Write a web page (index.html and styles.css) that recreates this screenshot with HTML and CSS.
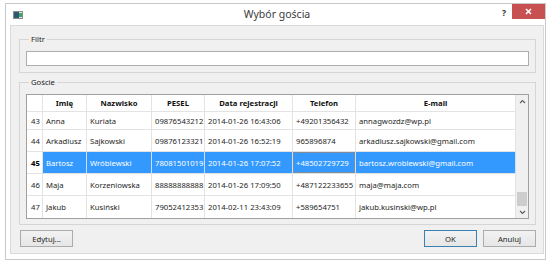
FILE: index.html
```html
<!DOCTYPE html>
<html lang="pl">

<head>
    <meta charset="UTF-8">
    <title>Wybór gościa</title>
    <link rel="stylesheet" href="styles.css">
</head>

<body>
    <div class="window">
        <div class="titlebar">
            <div class="tb-left">
                <svg class="app-icon" width="10" height="8" viewBox="0 0 10 8">
                    <rect x="0.5" y="0.5" width="9" height="7" fill="#e4e4e4" stroke="#8d8d8d"/>
                    <rect x="1" y="1" width="5" height="6" fill="#2c5878"/>
                    <rect x="6" y="2" width="3" height="4" fill="#3fa45f"/>
                </svg>
            </div>
            <div class="title">Wybór gościa</div>
            <div class="tb-right">
                <span class="help">?</span>
                <span class="close">
                    <svg width="7" height="7" viewBox="0 0 7 7">
                        <path d="M1 1 L6 6 M6 1 L1 6" stroke="#fff" stroke-width="1.6"/>
                    </svg>
                </span>
            </div>
        </div>

        <div class="client">
            <fieldset class="group group-filter">
                <legend>Filtr</legend>
                <input class="filter-input" type="text">
            </fieldset>

            <fieldset class="group group-guests">
                <legend>Goście</legend>
                <div class="grid">
                    <table class="guests">
                        <thead>
                            <tr>
                                <th class="c-num"></th>
                                <th class="c-name">Imię</th>
                                <th class="c-surname">Nazwisko</th>
                                <th class="c-pesel">PESEL</th>
                                <th class="c-date">Data rejestracji</th>
                                <th class="c-phone">Telefon</th>
                                <th class="c-mail">E-mail</th>
                            </tr>
                        </thead>
                        <tbody>
                            <tr class="first">
                                <td class="num">43</td>
                                <td>Anna</td>
                                <td>Kuriata</td>
                                <td>09876543212</td>
                                <td>2014-01-26 16:43:06</td>
                                <td>+49201356432</td>
                                <td>annagwozdz@wp.pl</td>
                            </tr>
                            <tr>
                                <td class="num">44</td>
                                <td>Arkadiusz</td>
                                <td>Sajkowski</td>
                                <td>09876123321</td>
                                <td>2014-01-26 16:52:19</td>
                                <td>965896874</td>
                                <td>arkadiusz.sajkowski@gmail.com</td>
                            </tr>
                            <tr class="selected">
                                <td class="num">45</td>
                                <td>Bartosz</td>
                                <td>Wróblewski</td>
                                <td>78081501019</td>
                                <td>2014-01-26 17:07:52</td>
                                <td class="focused">+48502729729</td>
                                <td>bartosz.wroblewski@gmail.com</td>
                            </tr>
                            <tr>
                                <td class="num">46</td>
                                <td>Maja</td>
                                <td>Korzeniowska</td>
                                <td>88888888888</td>
                                <td>2014-01-26 17:09:50</td>
                                <td>+487122233655</td>
                                <td>maja@maja.com</td>
                            </tr>
                            <tr class="last">
                                <td class="num">47</td>
                                <td>Jakub</td>
                                <td>Kusiński</td>
                                <td>79052412353</td>
                                <td>2014-02-11 23:43:09</td>
                                <td>+589654751</td>
                                <td>jakub.kusinski@wp.pl</td>
                            </tr>
                        </tbody>
                    </table>

                    <div class="scrollbar">
                        <div class="sb-arrow">
                            <svg width="7" height="5" viewBox="0 0 7 5">
                                <path d="M1 4 L3.5 1.5 L6 4" fill="none" stroke="#606060" stroke-width="1.2"/>
                            </svg>
                        </div>
                        <div class="sb-track">
                            <div class="sb-thumb"></div>
                        </div>
                        <div class="sb-arrow">
                            <svg width="7" height="5" viewBox="0 0 7 5">
                                <path d="M1 1 L3.5 3.5 L6 1" fill="none" stroke="#606060" stroke-width="1.2"/>
                            </svg>
                        </div>
                    </div>
                </div>
            </fieldset>

            <div class="buttons">
                <button class="btn btn-edit">Edytuj...</button>
                <span class="spacer"></span>
                <button class="btn btn-default">OK</button>
                <button class="btn">Anuluj</button>
            </div>
        </div>
    </div>
</body>

</html>
```

FILE: styles.css
```css
* {
    margin: 0;
    padding: 0;
    box-sizing: border-box;
}

body {
    font-family: 'Noto Sans', sans-serif;
    font-size: 7.7px;
    color: #1e1e1e;
    background: #fff;
}

/* Okno dialogowe */
.window {
    margin: 3px 0 0 5px;
    width: 541px;
    height: 257px;
    border: 1px solid #c9c9c9;
    background: #fff;
    display: flex;
    flex-direction: column;
}

.titlebar {
    height: 21px;
    display: grid;
    grid-template-columns: 1fr auto 1fr;
    align-items: start;
}

.tb-left {
    padding: 7px 0 0 7px;
}

.app-icon {
    display: block;
}

.title {
    font-size: 10.5px;
    color: #3a3a3a;
    line-height: 21px;
    padding-left: 3px;
}

.tb-right {
    display: flex;
    justify-content: flex-end;
    align-items: flex-start;
}

.help {
    font-weight: bold;
    font-size: 8.5px;
    color: #333;
    margin: 4px 6px 0 0;
    line-height: 10px;
}

.close {
    width: 33px;
    height: 15px;
    background: #c75050;
    display: flex;
    align-items: center;
    justify-content: center;
}

.client {
    flex: 1;
    margin: 0 1px 5px 4px;
    background: #f0f0f0;
    border: 1px solid #dadada;
    padding: 8px 7px 0 8px;
    display: flex;
    flex-direction: column;
}

/* Grupy */
.group {
    border: 1px solid #d5d5d5;
    padding: 0 6px 6px 6px;
}

.group legend {
    margin-left: 3px;
    padding: 0 2px;
    line-height: 10px;
    color: #222;
}

.group-filter .filter-input {
    display: block;
    width: 100%;
    height: 15px;
    margin-top: 7px;
    border: 1px solid #abadb3;
    background: #fff;
    outline: none;
}

.group-guests {
    margin-top: 4px;
    padding-bottom: 5px;
}

.grid {
    margin-top: 7px;
    display: flex;
    border: 1px solid #a0a0a0;
    background: #fff;
}

/* Tabela gości */
.guests {
    width: 489px;
    table-layout: fixed;
    border-collapse: separate;
    border-spacing: 0;
}

.guests th,
.guests td {
    border-right: 1px solid #e3e3e3;
    border-bottom: 1px solid #e3e3e3;
    white-space: nowrap;
    overflow: hidden;
    text-align: left;
    padding: 0 0 0 3px;
    vertical-align: middle;
}

.guests th {
    height: 17px;
    font-weight: bold;
    text-align: center;
    padding: 0;
    color: #111;
}

.c-num { width: 16px; }
.c-name { width: 44px; }
.c-surname { width: 65px; }
.c-pesel { width: 53px; }
.c-date { width: 88px; }
.c-phone { width: 63px; }
.c-mail { width: 160px; }

.guests td {
    height: 22px;
}

.guests tr.first td {
    height: 18px;
}

.guests tr.last td {
    border-bottom: none;
}

.guests td.num {
    padding-left: 4px;
}

.guests tr.selected td {
    background: #3399ff;
    color: #fff;
    border-right-color: #c7e0ff;
}

.guests tr.selected td.num {
    background: #fff;
    color: #000;
    font-weight: bold;
    border-right-color: #e3e3e3;
}

.guests tr.selected td.focused {
    box-shadow: inset 0 0 0 1px #7c8c9c;
}

/* Pasek przewijania */
.scrollbar {
    width: 12px;
    background: #f0f0f0;
    display: flex;
    flex-direction: column;
}

.sb-arrow {
    height: 12px;
    display: flex;
    align-items: center;
    justify-content: center;
}

.sb-track {
    flex: 1;
    display: flex;
    flex-direction: column;
    justify-content: flex-end;
    padding: 0 1px;
}

.sb-thumb {
    height: 14px;
    background: #cdcdcd;
}

/* Przyciski */
.buttons {
    display: flex;
    gap: 6px;
    margin-top: 5px;
    padding: 0 0 0 1px;
}

.spacer {
    flex: 1;
}

.btn {
    font-family: 'Noto Sans', sans-serif;
    font-size: 7.7px;
    color: #1e1e1e;
    width: 53px;
    height: 17px;
    border: 1px solid #acacac;
    background: linear-gradient(#f2f2f2, #e6e6e6);
}

.btn-default {
    border-color: #3c7fb1;
}
```
